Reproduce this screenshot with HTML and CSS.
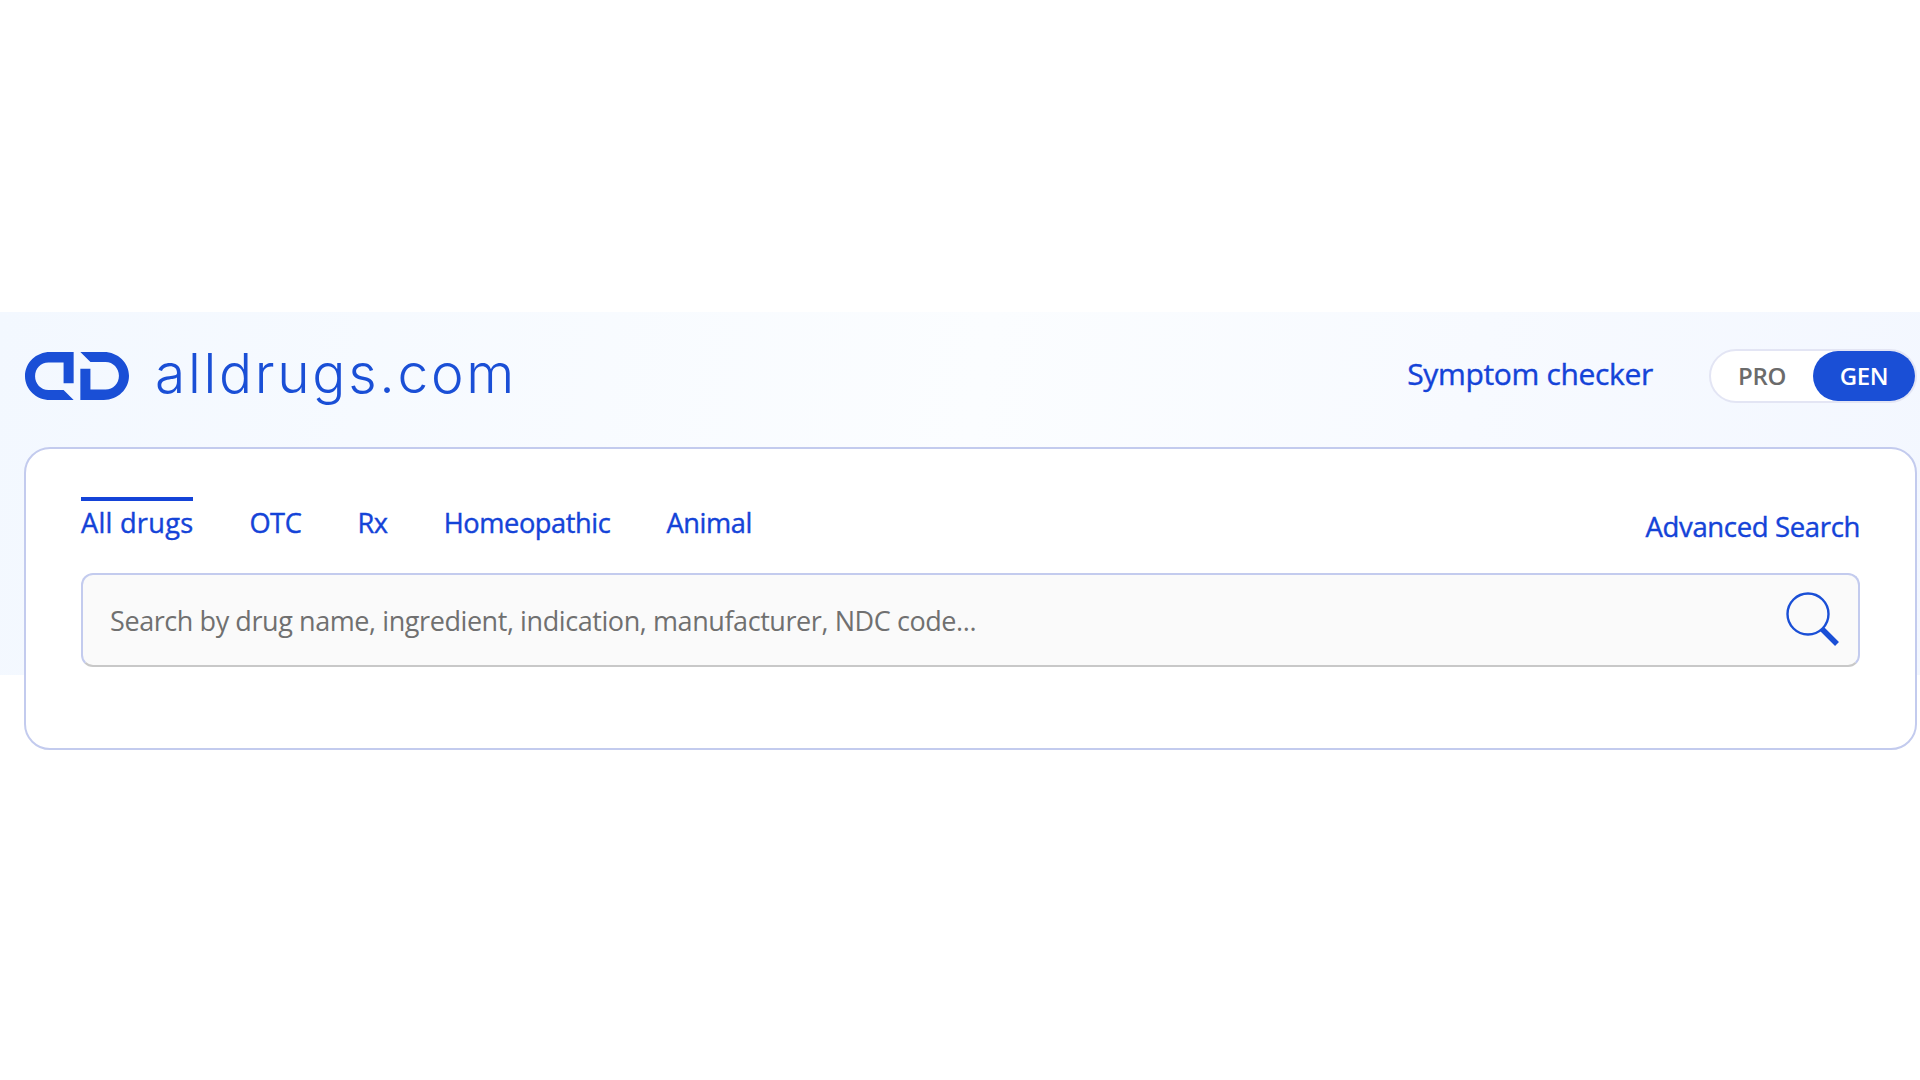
FILE: index.html
```html
<!DOCTYPE html>
<html lang="en">
<head>
<meta charset="utf-8">
<title>alldrugs.com</title>
<link rel="stylesheet" href="styles.css">
</head>
<body>
<main class="page">
  <section class="hero">
    <header class="topbar">
      <a class="brand" href="#">
        <svg class="brand-mark" viewBox="0 0 310 143" aria-hidden="true">
          <path d="M145 0H75C33 0 0 32 0 72C0 111 33 143 75 143H145L115 113H70C47 113 30 94 30 72C30 49 47 31 70 31H115V93H145Z"/>
          <path d="M165 143H235C277 143 310 111 310 71C310 32 277 0 235 0H165L195 30H240C263 30 280 49 280 71C280 94 263 112 240 112H195V50H165Z"/>
        </svg>
        <span class="brand-name">alldrugs.com</span>
      </a>
      <nav class="top-actions">
        <a class="symptom" href="#">Symptom checker</a>
        <div class="toggle">
          <span class="toggle-item">PRO</span>
          <span class="toggle-item is-on">GEN</span>
        </div>
      </nav>
    </header>
    <div class="card">
      <div class="tab-row">
        <ul class="tabs">
          <li class="tab is-active">All drugs</li>
          <li class="tab">OTC</li>
          <li class="tab">Rx</li>
          <li class="tab">Homeopathic</li>
          <li class="tab">Animal</li>
        </ul>
        <a class="advanced" href="#">Advanced Search</a>
      </div>
      <form class="search">
        <input class="search-input" type="text" placeholder="Search by drug name, ingredient, indication, manufacturer, NDC code...">
        <svg class="search-icon" viewBox="0 0 54 56" aria-hidden="true">
          <circle cx="22" cy="22" r="20.5" fill="none" stroke="#1a4fd6" stroke-width="2.4"/>
          <path d="M36 37L51 52" fill="none" stroke="#1a4fd6" stroke-width="5.5"/>
        </svg>
      </form>
    </div>
  </section>
</main>
</body>
</html>
```
FILE: styles.css
```css
* { box-sizing: border-box; }
html, body { margin: 0; background: #fff; }
body { font-family: "Open Sans", "Noto Sans", sans-serif; overflow: hidden; height: 1080px; }
a { text-decoration: none; color: inherit; }
.page { padding-top: 312px; }
.hero {
  height: 363px;
  background: linear-gradient(100deg, #f3f8ff 0%, #fbfdff 50%, #f3f7ff 100%);
  padding: 0 3px 0 25px;
}
.topbar {
  height: 128px;
  margin-bottom: 7px;
  display: flex;
  align-items: center;
  justify-content: space-between;
}
.brand { display: flex; align-items: center; gap: 26px; color: #1a4fd6; }
.brand-mark { width: 104px; height: 48px; fill: #1a4fd6; display: block; }
.brand-name {
  font-family: "Inter", sans-serif;
  font-weight: 300;
  font-size: 55px;
  line-height: 60px;
  letter-spacing: 2.7px;
  margin-bottom: 7px;
}
.top-actions { display: flex; align-items: center; gap: 56px; }
.symptom {
  color: #1443d8;
  font-size: 30px;
  font-weight: 500;
  -webkit-text-stroke: 0.4px #1443d8;
  letter-spacing: -0.33px;
  line-height: 40px;
  margin-bottom: 5px;
}
.toggle {
  width: 208px;
  height: 54px;
  display: flex;
  justify-content: space-between;
  align-items: center;
  padding: 1px;
  background: #fff;
  border: 2px solid #e3e5f4;
  border-radius: 27px;
}
.toggle-item {
  width: 103px;
  height: 50px;
  margin-right: -1px;
  padding-bottom: 2px;
  border-radius: 25px;
  display: flex;
  align-items: center;
  justify-content: center;
  font-size: 24px;
  font-weight: 600;
  color: #6b6b6b;
  letter-spacing: -0.3px;
}
.toggle-item:first-child { padding-right: 2px; }
.toggle-item.is-on { background: #1a4fd6; color: #fff; }
.card {
  margin-left: -1px;
  height: 303px;
  background: #fff;
  border: 2px solid #c3cbee;
  border-radius: 26px;
  padding: 48px 55px 0 55px;
}
.tab-row { display: flex; justify-content: space-between; align-items: flex-start; }
.tabs { list-style: none; margin: 0; padding: 0; display: flex; gap: 56px; }
.tab {
  color: #1443d8;
  font-size: 27.2px;
  font-weight: 500;
  -webkit-text-stroke: 0.4px #1443d8;
  line-height: 36px;
  letter-spacing: -0.4px;
  border-top: 4px solid transparent;
  padding-top: 4px;
}
.tab.is-active { border-top-color: #1443d8; letter-spacing: 0.25px; }
.advanced {
  color: #1443d8;
  font-size: 27.5px;
  font-weight: 500;
  -webkit-text-stroke: 0.4px #1443d8;
  line-height: 36px;
  letter-spacing: -0.35px;
  margin-top: 12px;
}
.search {
  margin-top: 28px;
  height: 94px;
  display: flex;
  align-items: center;
  background: #fafafa;
  border: 2px solid #c8c8c8;
  border-top-color: #c3cbee;
  border-left-color: #c3cbee;
  border-right-color: #c3cbee;
  border-radius: 12px;
  padding: 0 18px 0 27px;
}
.search-input {
  flex: 1;
  min-width: 0;
  border: 0;
  outline: 0;
  background: transparent;
  font-family: "Open Sans", sans-serif;
  font-size: 27px;
  letter-spacing: -0.42px;
  padding: 0;
  color: #707070;
}
.search-input::placeholder { color: #707070; opacity: 1; }
.search-icon { width: 54px; height: 56px; display: block; }
```
